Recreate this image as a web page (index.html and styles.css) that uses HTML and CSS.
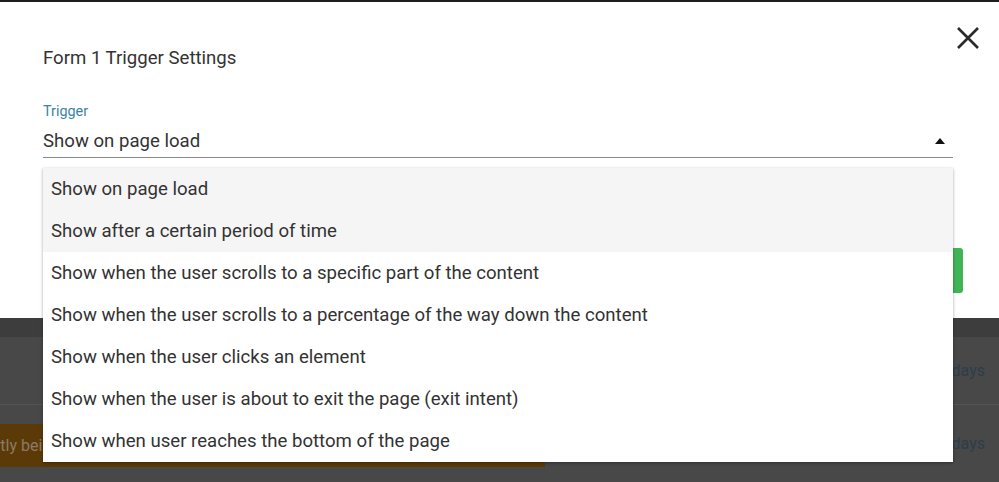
FILE: index.html
```html
<!DOCTYPE html>
<html lang="en">
<head>
    <meta charset="UTF-8">
    <meta name="viewport" content="width=device-width, initial-scale=1.0">
    <title>Form 1 Trigger Settings</title>
    <link rel="stylesheet" href="styles.css">
</head>
<body>

    <div class="topbar"></div>

    <div class="modal">
        <div class="modal-head">
            <h2 class="modal-title">Form 1 Trigger Settings</h2>
            <button class="close-btn" aria-label="Close">
                <svg width="24" height="24" viewBox="0 0 24 24">
                    <path d="M2 2 L22 22 M22 2 L2 22" stroke="#2b2b2b" stroke-width="2.6" fill="none"/>
                </svg>
            </button>
        </div>

        <div class="field">
            <label class="field-label">Trigger</label>
            <div class="select">
                <span>Show on page load</span>
                <span class="arrow"></span>
            </div>
        </div>

        <div class="actions">
            <button class="save-btn">Save</button>
        </div>
    </div>

    <div class="backdrop">
        <div class="strip"></div>
        <div class="row">
            <span class="days">Every 30 days</span>
        </div>
        <div class="row row-last">
            <div class="notice">Currently being edited</div>
            <span class="days">Every 30 days</span>
        </div>
    </div>

    <!-- open dropdown of the trigger select -->
    <ul class="menu">
        <li class="menu-item active">Show on page load</li>
        <li class="menu-item active">Show after a certain period of time</li>
        <li class="menu-item">Show when the user scrolls to a specific part of the content</li>
        <li class="menu-item">Show when the user scrolls to a percentage of the way down the content</li>
        <li class="menu-item">Show when the user clicks an element</li>
        <li class="menu-item">Show when the user is about to exit the page (exit intent)</li>
        <li class="menu-item">Show when user reaches the bottom of the page</li>
    </ul>

</body>
</html>
```

FILE: styles.css
```css
body {
    font-family: 'Roboto', 'Liberation Sans', sans-serif;
    background-color: #4a4a4a;
    color: #333;
    margin: 0;
    padding: 0;
    height: 482px;
    overflow: hidden;
    position: relative;
}

.topbar {
    height: 2px;
    background-color: #1e1e1e;
}

.modal {
    background: white;
    height: 316px;
    box-sizing: border-box;
    padding: 24px 46px 0 43px;
}

.modal-head {
    display: flex;
    justify-content: space-between;
    align-items: flex-start;
}

.modal-title {
    margin: 20px 0 0;
    font-size: 18.6px;
    font-weight: normal;
    line-height: 24px;
    color: #333;
}

.close-btn {
    border: none;
    background: none;
    padding: 0;
    margin-right: -27px;
    width: 24px;
    height: 24px;
}

.field {
    margin-top: 34px;
}

.field-label {
    display: block;
    font-size: 14.4px;
    line-height: 16px;
    color: #3a84a6;
}

.select {
    display: flex;
    justify-content: space-between;
    align-items: center;
    margin-top: 9px;
    padding-bottom: 4px;
    font-size: 18.6px;
    line-height: 24px;
    color: #333;
    border-bottom: 1px solid #8a8a8a;
}

.arrow {
    width: 0;
    height: 0;
    margin-right: 8px;
    border-left: 5px solid transparent;
    border-right: 5px solid transparent;
    border-bottom: 6px solid #111;
}

.actions {
    display: flex;
    justify-content: flex-end;
    margin-top: 90px;
    margin-right: -10px;
}

.save-btn {
    height: 45px;
    width: 100px;
    border: none;
    border-radius: 3px;
    background-color: #3fb556;
    color: white;
    font-size: 16px;
}

.backdrop {
    height: 164px;
}

.strip {
    height: 19px;
    background-color: #3d3d3d;
}

.row {
    height: 67px;
    display: flex;
    align-items: center;
    justify-content: flex-end;
    background-color: #484848;
    border-bottom: 1px solid #535353;
}

.row-last {
    height: 77px;
    border-bottom: none;
    justify-content: space-between;
}

.days {
    font-size: 16px;
    color: #2d3d4c;
    padding-right: 14px;
}

.notice {
    width: 545px;
    height: 43px;
    margin-top: 4px;
    box-sizing: border-box;
    background-color: #5c3a08;
    color: #8c7b66;
    font-size: 16px;
    line-height: 43px;
    text-indent: -47px;
    overflow: hidden;
    white-space: nowrap;
}

.menu {
    position: absolute;
    top: 168px;
    left: 43px;
    width: 910px;
    margin: 0;
    padding: 0;
    list-style: none;
    background: white;
    box-shadow: 0 1px 3px rgba(0, 0, 0, 0.35);
}

.menu-item {
    height: 42px;
    line-height: 42px;
    padding-left: 8px;
    font-size: 18.6px;
    color: #333;
}

.menu-item.active {
    background-color: #f5f5f5;
}
```
